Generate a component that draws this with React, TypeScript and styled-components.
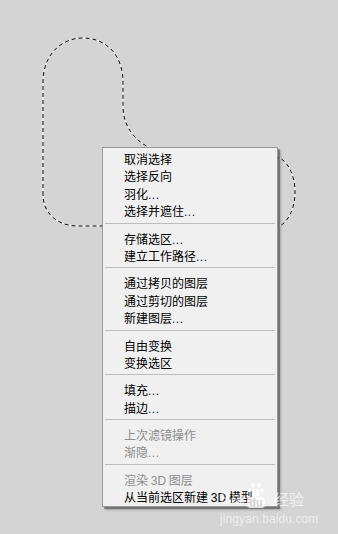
import React from "react";
import styled, { createGlobalStyle } from "styled-components";

const GlobalStyle = createGlobalStyle`
  html, body {
    margin: 0;
    padding: 0;
    background: #d4d4d4;
  }
  body {
    font-family: "Noto Sans CJK SC", "Liberation Sans", sans-serif;
  }
`;

const Canvas = styled.div`
  position: relative;
  width: 338px;
  height: 534px;
  overflow: hidden;
  background: #d4d4d4;
`;

const Selection = styled.svg`
  position: absolute;
  left: 0;
  top: 0;
  width: 338px;
  height: 534px;
`;

const Menu = styled.div`
  position: absolute;
  left: 102px;
  top: 147px;
  width: 174px;
  padding: 2px 0 0 0;
  background: #f0f0f0;
  border: 1px solid #979797;
  box-shadow: 2px 2px 0 rgba(0, 0, 0, 0.3), 3px 3px 2px rgba(0, 0, 0, 0.22);
  display: flex;
  flex-direction: column;
`;

const Item = styled.div<{ $disabled?: boolean }>`
  height: 17.4px;
  line-height: 17.4px;
  padding-left: 21px;
  font-family: "Noto Sans CJK SC", "Liberation Sans", sans-serif;
  font-size: 12px;
  color: ${(p) => (p.$disabled ? "#8d8d8d" : "#000000")};
  white-space: nowrap;
`;

const Latin = styled.span`
  font-family: "Liberation Sans", "DejaVu Sans", sans-serif;
  font-size: 12px;
`;

const Dots = styled.span<{ $disabled?: boolean }>`
  font-family: "Liberation Sans", sans-serif;
  font-size: 12px;
  letter-spacing: 0.5px;
  color: ${(p) => (p.$disabled ? "#8d8d8d" : "#10204a")};
`;

const Separator = styled.div`
  height: 10px;
  padding: 3px 2px 0 2px;
  box-sizing: border-box;
  &::before {
    content: "";
    display: block;
    height: 1px;
    background: #bcbcbc;
  }
`;

const Watermark = styled.div`
  position: absolute;
  left: 220px;
  top: 478px;
  display: flex;
  flex-direction: column;
  align-items: flex-start;
`;

const LogoRow = styled.div`
  display: flex;
  align-items: flex-end;
  gap: 2px;
  height: 30px;
`;

const Bai = styled.span`
  font-family: "Liberation Sans", sans-serif;
  font-weight: bold;
  font-size: 16px;
  line-height: 16px;
  color: rgba(255, 255, 255, 0.5);
  margin-bottom: 1px;
`;

const PawBox = styled.div`
  display: flex;
  flex-direction: column;
  align-items: center;
  width: 18px;
`;

const Du = styled.span`
  display: block;
  background: rgba(255, 255, 255, 0.75);
  color: #d4d4d4;
  border-radius: 3px;
  font-family: "Liberation Sans", sans-serif;
  font-weight: bold;
  font-size: 11px;
  line-height: 10px;
  padding: 0 2px 1px;
`;

const Jy = styled.span`
  font-family: "Noto Sans CJK SC", sans-serif;
  font-size: 15px;
  line-height: 18px;
  margin-left: 7px;
  color: rgba(255, 255, 255, 0.7);
`;

const Url = styled.span`
  font-family: "Liberation Sans", sans-serif;
  font-size: 12px;
  line-height: 14px;
  margin-top: 4px;
  color: rgba(255, 255, 255, 0.6);
  letter-spacing: 0.1px;
`;

type Entry =
  | { sep: true }
  | { sep?: false; label: React.ReactNode; dots?: boolean; disabled?: boolean };

const entries: Entry[] = [
  { label: "取消选择" },
  { label: "选择反向" },
  { label: "羽化", dots: true },
  { label: "选择并遮住", dots: true },
  { sep: true },
  { label: "存储选区", dots: true },
  { label: "建立工作路径", dots: true },
  { sep: true },
  { label: "通过拷贝的图层" },
  { label: "通过剪切的图层" },
  { label: "新建图层", dots: true },
  { sep: true },
  { label: "自由变换" },
  { label: "变换选区" },
  { sep: true },
  { label: "填充", dots: true },
  { label: "描边", dots: true },
  { sep: true },
  { label: "上次滤镜操作", disabled: true },
  { label: "渐隐", dots: true, disabled: true },
  { sep: true },
  {
    label: (
      <>
        渲染 <Latin>3D</Latin> 图层
      </>
    ),
    disabled: true,
  },
  {
    label: (
      <>
        从当前选区新建 <Latin>3D</Latin> 模型
      </>
    ),
  },
];

const pathD =
  "M 43 195 L 43 82 C 43 56 60 38 83 38 C 107 38 123 56 123 82 L 123 106 C 123 126 134 140 150 148 " +
  "L 280 158 C 300 170 300 214 280 226 L 78 226 C 56 226 43 212 43 195 Z";

export default function App() {
  return (
    <>
      <GlobalStyle />
      <Canvas>
        <Selection viewBox="0 0 338 534">
          <path d={pathD} fill="none" stroke="#ffffff" strokeWidth={1} />
          <path
            d={pathD}
            fill="none"
            stroke="#000000"
            strokeWidth={1}
            strokeDasharray="4 3"
          />
        </Selection>
        <Menu>
          {entries.map((e, i) =>
            e.sep ? (
              <Separator key={i} />
            ) : (
              <Item key={i} $disabled={e.disabled}>
                {e.label}
                {e.dots && <Dots $disabled={e.disabled}>...</Dots>}
              </Item>
            )
          )}
        </Menu>
        <Watermark>
          <LogoRow>
            <Bai>Bai</Bai>
            <PawBox>
              <svg width="16" height="14" viewBox="0 0 16 14">
                <g fill="rgba(255,255,255,0.7)">
                  <ellipse cx="5" cy="2.5" rx="1.8" ry="2.3" />
                  <ellipse cx="11" cy="2.5" rx="1.8" ry="2.3" />
                  <ellipse cx="2" cy="7" rx="1.7" ry="2.1" />
                  <ellipse cx="14" cy="7" rx="1.7" ry="2.1" />
                  <path d="M8 6 C 5 6 3.5 10 4 12 C 5 14 11 14 12 12 C 12.5 10 11 6 8 6 Z" />
                </g>
              </svg>
              <Du>du</Du>
            </PawBox>
            <Jy>经验</Jy>
          </LogoRow>
          <Url>jingyan.baidu.com</Url>
        </Watermark>
      </Canvas>
    </>
  );
}
